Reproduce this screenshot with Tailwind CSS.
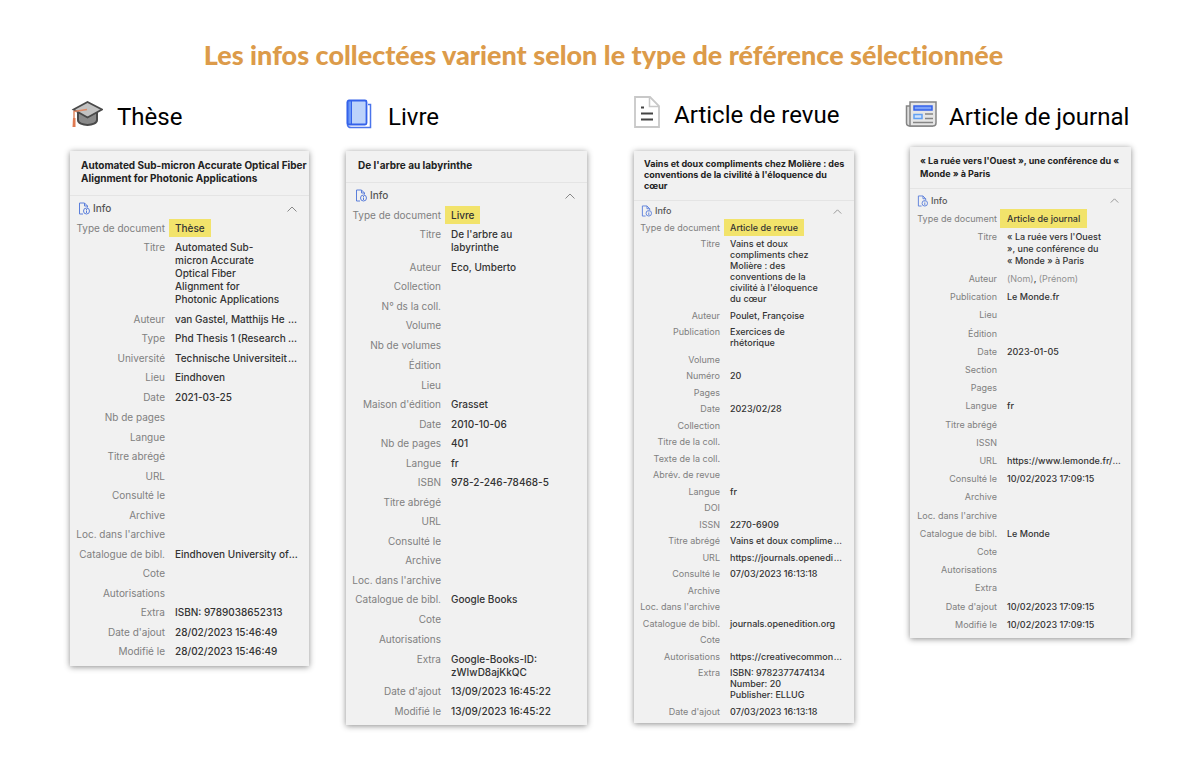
<!DOCTYPE html>
<html lang="fr">

<head>
    <meta charset="UTF-8">
    <meta name="viewport" content="width=device-width, initial-scale=1.0">
    <title>Types de référence</title>
    <script src="https://cdn.jsdelivr.net/npm/@tailwindcss/browser@4"></script>
</head>

<body class="bg-white font-['Inter',sans-serif] text-[#333333]">

    <!-- Icônes partagées du panneau Info -->
    <svg class="hidden">
        <symbol id="icon-info" viewBox="0 0 12 13">
            <path d="M5 12H1.500V1H6.500L9.500 4V5.500M6.500 1V4H9.500" fill="none" stroke="#5b7fdb" stroke-width="1" />
            <circle cx="8.500" cy="9" r="3" fill="#f1f1f1" stroke="#5b7fdb" stroke-width="1" />
            <path d="M8.500 8.500V11M8.500 7V8" stroke="#5b7fdb" stroke-width="1" />
        </symbol>
        <symbol id="icon-chevron" viewBox="0 0 10 6">
            <path d="M0.500 5.500L5 1L9.500 5.500" fill="none" stroke="#888888" stroke-width="1" />
        </symbol>
    </svg>

    <h1 class="pt-[37px] pl-[7px] text-center font-['Lato',sans-serif] text-[27px] leading-9 font-black text-[#dc9b4a] [font-variant-ligatures:none]">Les infos collectées varient selon le type de référence sélectionnée</h1>

    <main class="grid grid-cols-[276fr_288fr_276fr_221fr] items-start pl-[70px] pr-[69px] pt-[22px] pb-8">

        <!-- Thèse -->
        <section class="pr-[37px]">
            <h2 class="flex h-14 items-center gap-[14px] pb-3 font-['Roboto',sans-serif] text-2xl text-black">
                <svg class="mb-[6px] h-[28px] w-[33px] shrink-0" viewBox="0 0 33 28">
                    <path d="M8 13V20C8 26.500 27 26.500 27 20V13Z" fill="#8a8a8a" stroke="#4a4a4a" stroke-width="2" />
                    <path d="M3.500 9.500L17.500 2L32 9.500L17.500 17.500Z" fill="#c2c2c2" stroke="#4a4a4a" stroke-width="1.800" />
                    <path d="M17 9.500L4 11.500V20" fill="none" stroke="#e08a66" stroke-width="1.500" />
                    <path d="M3 18H5.500V27H2.500Z" fill="#e07a52" />
                </svg>
                Thèse
            </h2>
            <div class="bg-[#f1f1f1] pb-1 shadow-[0_1px_6px_rgba(0,0,0,0.45)]">
                <h3 class="border-b border-[#e4e4e4] pt-2 pb-[10px] pl-[11px] text-[10px] leading-[13px] font-bold whitespace-nowrap text-[#222222]">Automated Sub-micron Accurate Optical Fiber<br>Alignment for Photonic Applications</h3>
                <button type="button" class="flex h-[23px] w-full items-center gap-[3px] pt-[2px] pr-3 pl-2 text-[10px] font-medium text-[#555555]">
                    <svg class="h-[13px] w-3"><use href="#icon-info" /></svg>
                    Info
                    <svg class="ml-auto h-[6px] w-[10px]"><use href="#icon-chevron" /></svg>
                </button>
                <table class="w-full table-fixed text-[10px] leading-[13px] whitespace-nowrap [&_th]:w-[95px] [&_th]:pt-[3px] [&_th]:pb-[3px] [&_th]:text-right [&_th]:align-top [&_th]:font-normal [&_th]:text-[#808080] [&_td]:pt-[3px] [&_td]:pr-3 [&_td]:pb-[3px] [&_td]:pl-[10px] [&_td]:align-top [&_td]:font-medium [&_tr:nth-child(even)>*]:pb-[4px] [&_tr:nth-child(7n)>*]:pb-[4px]">
                    <tr><th>Type de document</th><td><mark class="bg-[#f2e36b] px-[6px] py-[3px] -mx-[6px] text-[#333333]">Thèse</mark></td></tr>
                    <tr><th>Titre</th><td>Automated Sub-<br>micron Accurate<br>Optical Fiber<br>Alignment for<br>Photonic Applications</td></tr>
                    <tr><th>Auteur</th><td><div class="flex justify-between"><span>van Gastel, Matthijs He</span><span>...</span></div></td></tr>
                    <tr><th>Type</th><td><div class="flex justify-between"><span>Phd Thesis 1 (Research</span><span>...</span></div></td></tr>
                    <tr><th>Université</th><td><div class="flex justify-between"><span>Technische Universiteit</span><span>...</span></div></td></tr>
                    <tr><th>Lieu</th><td>Eindhoven</td></tr>
                    <tr><th>Date</th><td>2021-03-25</td></tr>
                    <tr><th>Nb de pages</th><td></td></tr>
                    <tr><th>Langue</th><td></td></tr>
                    <tr><th>Titre abrégé</th><td></td></tr>
                    <tr><th>URL</th><td></td></tr>
                    <tr><th>Consulté le</th><td></td></tr>
                    <tr><th>Archive</th><td></td></tr>
                    <tr><th>Loc. dans l'archive</th><td></td></tr>
                    <tr><th>Catalogue de bibl.</th><td><div class="flex justify-between"><span>Eindhoven University of</span><span>...</span></div></td></tr>
                    <tr><th>Cote</th><td></td></tr>
                    <tr><th>Autorisations</th><td></td></tr>
                    <tr><th>Extra</th><td>ISBN: 9789038652313</td></tr>
                    <tr><th>Date d'ajout</th><td>28/02/2023 15:46:49</td></tr>
                    <tr><th>Modifié le</th><td>28/02/2023 15:46:49</td></tr>
                </table>
            </div>
        </section>

        <!-- Livre -->
        <section class="pr-[47px]">
            <h2 class="flex h-14 items-center gap-4 pb-3 font-['Roboto',sans-serif] text-2xl text-black">
                <svg class="mb-[6px] h-[30px] w-[26px] shrink-0" viewBox="0 0 26 30">
                    <path d="M1.500 3V26Q2 28.500 5 28.500H24.500V5.500H22" fill="#ffffff" stroke="#4a74ec" stroke-width="1.500" />
                    <rect x="1.500" y="1.500" width="19" height="24" rx="1.500" fill="#bcd3fb" stroke="#3462ea" stroke-width="1.800" />
                    <path d="M2 2H5.500V25H2Z" fill="#6b98f6" stroke="#3462ea" stroke-width="1" />
                </svg>
                Livre
            </h2>
            <div class="bg-[#f1f1f1] pb-1 shadow-[0_1px_6px_rgba(0,0,0,0.45)]">
                <h3 class="border-b border-[#e4e4e4] pt-2 pb-[10px] pl-3 text-[10px] leading-[13px] font-bold whitespace-nowrap text-[#222222]">De l'arbre au labyrinthe</h3>
                <button type="button" class="flex h-[23px] w-full items-center gap-[3px] pt-[2px] pr-3 pl-[9px] text-[10px] font-medium text-[#555555]">
                    <svg class="h-[13px] w-3"><use href="#icon-info" /></svg>
                    Info
                    <svg class="ml-auto h-[6px] w-[10px]"><use href="#icon-chevron" /></svg>
                </button>
                <table class="w-full table-fixed text-[10px] leading-[13px] whitespace-nowrap [&_th]:w-[95px] [&_th]:pt-[3px] [&_th]:pb-[3px] [&_th]:text-right [&_th]:align-top [&_th]:font-normal [&_th]:text-[#808080] [&_td]:pt-[3px] [&_td]:pr-3 [&_td]:pb-[3px] [&_td]:pl-[10px] [&_td]:align-top [&_td]:font-medium [&_tr:nth-child(even)>*]:pb-[4px] [&_tr:nth-child(7n)>*]:pb-[4px]">
                    <tr><th>Type de document</th><td><mark class="bg-[#f2e36b] px-[6px] py-[3px] -mx-[6px] text-[#333333]">Livre</mark></td></tr>
                    <tr><th>Titre</th><td>De l'arbre au<br>labyrinthe</td></tr>
                    <tr><th>Auteur</th><td>Eco, Umberto</td></tr>
                    <tr><th>Collection</th><td></td></tr>
                    <tr><th>N° ds la coll.</th><td></td></tr>
                    <tr><th>Volume</th><td></td></tr>
                    <tr><th>Nb de volumes</th><td></td></tr>
                    <tr><th>Édition</th><td></td></tr>
                    <tr><th>Lieu</th><td></td></tr>
                    <tr><th>Maison d'édition</th><td>Grasset</td></tr>
                    <tr><th>Date</th><td>2010-10-06</td></tr>
                    <tr><th>Nb de pages</th><td>401</td></tr>
                    <tr><th>Langue</th><td>fr</td></tr>
                    <tr><th>ISBN</th><td>978-2-246-78468-5</td></tr>
                    <tr><th>Titre abrégé</th><td></td></tr>
                    <tr><th>URL</th><td></td></tr>
                    <tr><th>Consulté le</th><td></td></tr>
                    <tr><th>Archive</th><td></td></tr>
                    <tr><th>Loc. dans l'archive</th><td></td></tr>
                    <tr><th>Catalogue de bibl.</th><td>Google Books</td></tr>
                    <tr><th>Cote</th><td></td></tr>
                    <tr><th>Autorisations</th><td></td></tr>
                    <tr><th>Extra</th><td>Google-Books-ID:<br>zWIwD8ajKkQC</td></tr>
                    <tr><th>Date d'ajout</th><td>13/09/2023 16:45:22</td></tr>
                    <tr><th>Modifié le</th><td>13/09/2023 16:45:22</td></tr>
                </table>
            </div>
        </section>

        <!-- Article de revue -->
        <section class="pr-[56px]">
            <h2 class="flex h-14 items-center gap-[14px] pb-4 font-['Roboto',sans-serif] text-2xl whitespace-nowrap text-black">
                <svg class="mb-[6px] h-[32px] w-[26px] shrink-0" viewBox="0 0 26 32">
                    <path d="M1 1H16L25 10V31H1Z" fill="#ffffff" stroke="#c8c8c8" stroke-width="1.800" />
                    <path d="M15.500 1V10.500H25" fill="none" stroke="#c8c8c8" stroke-width="1.500" />
                    <path d="M7 11.500H10M7 17.500H19M7 23.500H19" stroke="#444444" stroke-width="2" />
                </svg>
                Article de revue
            </h2>
            <div class="bg-[#f1f1f1] pb-1 shadow-[0_1px_6px_rgba(0,0,0,0.45)]">
                <h3 class="border-b border-[#e4e4e4] pt-[7px] pb-[9px] pl-[10px] text-[9px] leading-[11px] font-bold whitespace-nowrap text-[#222222]">Vains et doux compliments chez Molière : des<br>conventions de la civilité à l'éloquence du<br>cœur</h3>
                <button type="button" class="flex h-[18px] w-full items-center gap-[3px] pt-[2px] pr-3 pl-[7px] text-[9px] font-medium text-[#555555]">
                    <svg class="h-3 w-[11px]"><use href="#icon-info" /></svg>
                    Info
                    <svg class="ml-auto h-[5px] w-[9px]"><use href="#icon-chevron" /></svg>
                </button>
                <table class="w-full table-fixed text-[9px] leading-[11px] whitespace-nowrap [&_th]:w-[86px] [&_th]:pt-[3px] [&_th]:pb-[2px] [&_th]:text-right [&_th]:align-top [&_th]:font-normal [&_th]:text-[#808080] [&_td]:pt-[3px] [&_td]:pr-3 [&_td]:pb-[2px] [&_td]:pl-[10px] [&_td]:align-top [&_td]:font-medium [&_tr:nth-child(even)>*]:pb-[3px]">
                    <tr><th>Type de document</th><td><mark class="bg-[#f2e36b] px-[6px] py-[3px] -mx-[6px] text-[#333333]">Article de revue</mark></td></tr>
                    <tr><th>Titre</th><td>Vains et doux<br>compliments chez<br>Molière : des<br>conventions de la<br>civilité à l'éloquence<br>du cœur</td></tr>
                    <tr><th>Auteur</th><td>Poulet, Françoise</td></tr>
                    <tr><th>Publication</th><td>Exercices de<br>rhétorique</td></tr>
                    <tr><th>Volume</th><td></td></tr>
                    <tr><th>Numéro</th><td>20</td></tr>
                    <tr><th>Pages</th><td></td></tr>
                    <tr><th>Date</th><td>2023/02/28</td></tr>
                    <tr><th>Collection</th><td></td></tr>
                    <tr><th>Titre de la coll.</th><td></td></tr>
                    <tr><th>Texte de la coll.</th><td></td></tr>
                    <tr><th>Abrév. de revue</th><td></td></tr>
                    <tr><th>Langue</th><td>fr</td></tr>
                    <tr><th>DOI</th><td></td></tr>
                    <tr><th>ISSN</th><td>2270-6909</td></tr>
                    <tr><th>Titre abrégé</th><td><div class="flex justify-between"><span>Vains et doux complime</span><span>...</span></div></td></tr>
                    <tr><th>URL</th><td><div class="flex justify-between"><span>https://journals.openedi</span><span>...</span></div></td></tr>
                    <tr><th>Consulté le</th><td>07/03/2023 16:13:18</td></tr>
                    <tr><th>Archive</th><td></td></tr>
                    <tr><th>Loc. dans l'archive</th><td></td></tr>
                    <tr><th>Catalogue de bibl.</th><td>journals.openedition.org</td></tr>
                    <tr><th>Cote</th><td></td></tr>
                    <tr><th>Autorisations</th><td><div class="flex justify-between"><span>https://creativecommon</span><span>...</span></div></td></tr>
                    <tr><th>Extra</th><td>ISBN: 9782377474134<br>Number: 20<br>Publisher: ELLUG</td></tr>
                    <tr><th>Date d'ajout</th><td>07/03/2023 16:13:18</td></tr>
                </table>
            </div>
        </section>

        <!-- Article de journal -->
        <section>
            <h2 class="flex h-[52px] items-center gap-3 pb-2 font-['Roboto',sans-serif] text-2xl whitespace-nowrap text-black -ml-[5px]">
                <svg class="mb-[6px] h-[26px] w-8 shrink-0" viewBox="0 0 32 26">
                    <path d="M5 5H1.500V22Q1.500 25 5 25H28" fill="#dddddd" stroke="#858585" stroke-width="1.500" />
                    <path d="M5 1H31V22Q31 25 28 25H5Z" fill="#e6e6e6" stroke="#858585" stroke-width="1.500" />
                    <rect x="9" y="5" width="18" height="4" fill="#7da2f8" stroke="#3462ea" stroke-width="1.500" />
                    <rect x="9" y="13.500" width="8" height="4" fill="#cfe2fd" stroke="#62a0f2" stroke-width="1.500" />
                    <path d="M20 13H28M20 17.500H28M8 21.500H28" stroke="#858585" stroke-width="1.500" />
                </svg>
                Article de journal
            </h2>
            <div class="bg-[#f1f1f1] pb-1 shadow-[0_1px_6px_rgba(0,0,0,0.45)]">
                <h3 class="border-b border-[#e4e4e4] pt-[7px] pb-2 pl-[10px] text-[9px] leading-[13px] font-bold whitespace-nowrap text-[#222222]">« La ruée vers l'Ouest », une conférence du «<br>Monde » à Paris</h3>
                <button type="button" class="flex h-[21px] w-full items-center gap-[3px] pt-[2px] pr-3 pl-[7px] text-[9px] font-medium text-[#555555]">
                    <svg class="h-3 w-[11px]"><use href="#icon-info" /></svg>
                    Info
                    <svg class="ml-auto h-[5px] w-[9px]"><use href="#icon-chevron" /></svg>
                </button>
                <table class="w-full table-fixed text-[9px] leading-3 whitespace-nowrap [&_th]:w-[87px] [&_th]:pt-[3px] [&_th]:pb-[3px] [&_th]:text-right [&_th]:align-top [&_th]:font-normal [&_th]:text-[#808080] [&_td]:pt-[3px] [&_td]:pr-3 [&_td]:pb-[3px] [&_td]:pl-[10px] [&_td]:align-top [&_td]:font-medium [&_tr:nth-child(5n)>*]:pb-[4px]">
                    <tr><th>Type de document</th><td><mark class="bg-[#f2e36b] px-[7px] py-1 -mx-[7px] text-[#333333]">Article de journal</mark></td></tr>
                    <tr><th>Titre</th><td>« La ruée vers l'Ouest<br>», une conférence du<br>« Monde » à Paris</td></tr>
                    <tr><th>Auteur</th><td><span class="font-normal text-[#909090]">(Nom)</span>, <span class="font-normal text-[#909090]">(Prénom)</span></td></tr>
                    <tr><th>Publication</th><td>Le Monde.fr</td></tr>
                    <tr><th>Lieu</th><td></td></tr>
                    <tr><th>Édition</th><td></td></tr>
                    <tr><th>Date</th><td>2023-01-05</td></tr>
                    <tr><th>Section</th><td></td></tr>
                    <tr><th>Pages</th><td></td></tr>
                    <tr><th>Langue</th><td>fr</td></tr>
                    <tr><th>Titre abrégé</th><td></td></tr>
                    <tr><th>ISSN</th><td></td></tr>
                    <tr><th>URL</th><td><div class="flex justify-between"><span>https://www.lemonde.fr/</span><span>...</span></div></td></tr>
                    <tr><th>Consulté le</th><td>10/02/2023 17:09:15</td></tr>
                    <tr><th>Archive</th><td></td></tr>
                    <tr><th>Loc. dans l'archive</th><td></td></tr>
                    <tr><th>Catalogue de bibl.</th><td>Le Monde</td></tr>
                    <tr><th>Cote</th><td></td></tr>
                    <tr><th>Autorisations</th><td></td></tr>
                    <tr><th>Extra</th><td></td></tr>
                    <tr><th>Date d'ajout</th><td>10/02/2023 17:09:15</td></tr>
                    <tr><th>Modifié le</th><td>10/02/2023 17:09:15</td></tr>
                </table>
            </div>
        </section>

    </main>

</body>

</html>
